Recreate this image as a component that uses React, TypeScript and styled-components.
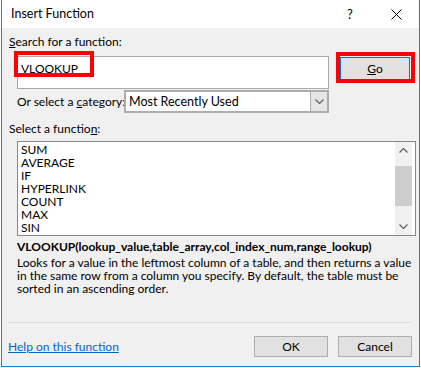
import styled, { createGlobalStyle } from "styled-components";

const GlobalStyle = createGlobalStyle`
  body {
    margin: 0;
    background: #ffffff;
    font-family: Lato, "Noto Sans", "Liberation Sans", sans-serif;
    font-size: 12px;
    color: #000000;
  }
`;

const functions = ["SUM", "AVERAGE", "IF", "HYPERLINK", "COUNT", "MAX", "SIN"];

const Dialog = styled.div`
  position: relative;
  margin-left: 1px;
  width: 419px;
  height: 367px;
  box-sizing: border-box;
  border: 1px solid #1883d7;
  border-top: none;
  background: #f0f0f0;
  display: flex;
  flex-direction: column;
`;

const TitleBar = styled.div`
  height: 28px;
  background: #ffffff;
  display: flex;
  align-items: center;
  padding-left: 9px;
  flex-shrink: 0;
`;

const Title = styled.div`
  flex: 1;
  font-size: 12.5px;
  line-height: 15px;
  margin-top: -1px;
`;

const TitleButton = styled.div<{ $w: number }>`
  width: ${(p) => p.$w}px;
  height: 28px;
  display: flex;
  align-items: center;
  justify-content: center;
  font-size: 13px;
`;

const Body = styled.div`
  flex: 1;
  display: flex;
  flex-direction: column;
  padding: 6px 7px 9px 7px;
`;

const Label = styled.div`
  line-height: 15px;
  white-space: nowrap;
`;

const U = styled.span`
  text-decoration: underline;
`;

const SearchRow = styled.div`
  display: flex;
  align-items: flex-start;
  margin-top: 7px;
  margin-left: 8px;
`;

const SearchBox = styled.div`
  width: 312px;
  height: 33px;
  box-sizing: border-box;
  border: 1px solid #a9a9a9;
  background: #ffffff;
  padding: 4px 3px;
  line-height: 15px;
`;

const Button = styled.div<{ $default?: boolean; $w: number }>`
  width: ${(p) => p.$w}px;
  height: ${(p) => (p.$default ? 23 : 21)}px;
  box-sizing: border-box;
  border: 1px solid ${(p) => (p.$default ? "#0078d7" : "#adadad")};
  background: #e1e1e1;
  display: flex;
  align-items: center;
  justify-content: center;
`;

const GoWrap = styled.div`
  margin-left: 11px;
  margin-top: 1px;
`;

const CategoryRow = styled.div`
  display: flex;
  align-items: center;
  margin-top: 1px;
  margin-left: 8px;
  height: 23px;
`;

const CategoryLabelWrap = styled.div`
  width: 107px;
  flex-shrink: 0;
`;

const Combo = styled.div`
  width: 205px;
  height: 23px;
  box-sizing: border-box;
  border: 2px solid #adadad;
  background: #ffffff;
  display: flex;
  align-items: stretch;
`;

const ComboText = styled.div`
  flex: 1;
  padding-left: 3px;
  display: flex;
  align-items: center;
  font-size: 12.5px;
`;

const ComboArrow = styled.div`
  width: 16px;
  background: #e5e5e5;
  border-left: 1px solid #adadad;
  display: flex;
  align-items: center;
  justify-content: center;
`;

const ListBox = styled.div`
  margin-top: 5px;
  margin-left: 8px;
  margin-right: -4px;
  height: 95px;
  box-sizing: border-box;
  border: 1px solid #828790;
  background: #ffffff;
  display: flex;
`;

const ListItems = styled.div`
  flex: 1;
  padding: 1px 3px;
`;

const ListItem = styled.div`
  height: 13px;
  line-height: 13px;
`;

const ScrollBar = styled.div`
  width: 17px;
  margin-right: 3px;
  background: #f0f0f0;
  display: flex;
  flex-direction: column;
`;

const ScrollArrow = styled.div`
  height: 17px;
  display: flex;
  align-items: center;
  justify-content: center;
`;

const ScrollTrack = styled.div`
  flex: 1;
  display: flex;
  flex-direction: column;
  padding-top: 7px;
`;

const Thumb = styled.div`
  height: 40px;
  background: #cdcdcd;
`;

const Syntax = styled.div`
  margin-top: 4px;
  margin-left: 8px;
  font-weight: bold;
  line-height: 14px;
  white-space: nowrap;
`;

const Description = styled.div`
  margin-top: 2px;
  margin-left: 8px;
  line-height: 13px;
  white-space: nowrap;
`;

const Separator = styled.div`
  margin-top: auto;
  margin-left: -1px;
  height: 1px;
  background: #dcdcdc;
`;

const Footer = styled.div`
  margin-top: 13px;
  display: flex;
  align-items: center;
`;

const HelpLink = styled.a`
  flex: 1;
  margin-left: -1px;
  color: #0066cc;
  text-decoration: underline;
  line-height: 15px;
`;

const ButtonGap = styled.div`
  width: 10px;
`;

const Highlight = styled.div<{ $x: number; $y: number; $w: number; $h: number }>`
  position: absolute;
  left: ${(p) => p.$x}px;
  top: ${(p) => p.$y}px;
  width: ${(p) => p.$w}px;
  height: ${(p) => p.$h}px;
  box-sizing: border-box;
  border: 4px solid #ff0000;
  pointer-events: none;
`;

const Chevron = ({ up }: { up?: boolean }) => (
  <svg width="9" height="5" viewBox="0 0 9 5">
    <polyline
      points={up ? "0.5,4.5 4.5,0.5 8.5,4.5" : "0.5,0.5 4.5,4.5 8.5,0.5"}
      fill="none"
      stroke="#606060"
      strokeWidth="1.2"
    />
  </svg>
);

export default function App() {
  return (
    <>
      <GlobalStyle />
      <Dialog>
        <TitleBar>
          <Title>Insert Function</Title>
          <TitleButton $w={46}>?</TitleButton>
          <TitleButton $w={46}>
            <svg width="11" height="11" viewBox="0 0 11 11">
              <path d="M0.5 0.5 L10.5 10.5 M10.5 0.5 L0.5 10.5" stroke="#000" strokeWidth="1" />
            </svg>
          </TitleButton>
        </TitleBar>
        <Body>
          <Label>
            <U>S</U>earch for a function:
          </Label>
          <SearchRow>
            <SearchBox>VLOOKUP</SearchBox>
            <GoWrap>
              <Button $default $w={70}>
                <span>
                  <U>G</U>o
                </span>
              </Button>
            </GoWrap>
          </SearchRow>
          <CategoryRow>
            <CategoryLabelWrap>
              <Label>
                Or select a <U>c</U>ategory:
              </Label>
            </CategoryLabelWrap>
            <Combo>
              <ComboText>Most Recently Used</ComboText>
              <ComboArrow>
                <Chevron />
              </ComboArrow>
            </Combo>
          </CategoryRow>
          <Label style={{ marginTop: 8 }}>
            Select a functio<U>n</U>:
          </Label>
          <ListBox>
            <ListItems>
              {functions.map((f) => (
                <ListItem key={f}>{f}</ListItem>
              ))}
            </ListItems>
            <ScrollBar>
              <ScrollArrow>
                <Chevron up />
              </ScrollArrow>
              <ScrollTrack>
                <Thumb />
              </ScrollTrack>
              <ScrollArrow>
                <Chevron />
              </ScrollArrow>
            </ScrollBar>
          </ListBox>
          <Syntax>VLOOKUP(lookup_value,table_array,col_index_num,range_lookup)</Syntax>
          <Description>
            Looks for a value in the leftmost column of a table, and then returns a value
            <br />
            in the same row from a column you specify. By default, the table must be
            <br />
            sorted in an ascending order.
          </Description>
          <Separator />
          <Footer>
            <HelpLink>Help on this function</HelpLink>
            <Button $w={74}>OK</Button>
            <ButtonGap />
            <Button $w={74}>Cancel</Button>
          </Footer>
        </Body>
        <Highlight $x={12} $y={51} $w={80} $h={26} />
        <Highlight $x={334} $y={52} $w={79} $h={31} />
      </Dialog>
    </>
  );
}
